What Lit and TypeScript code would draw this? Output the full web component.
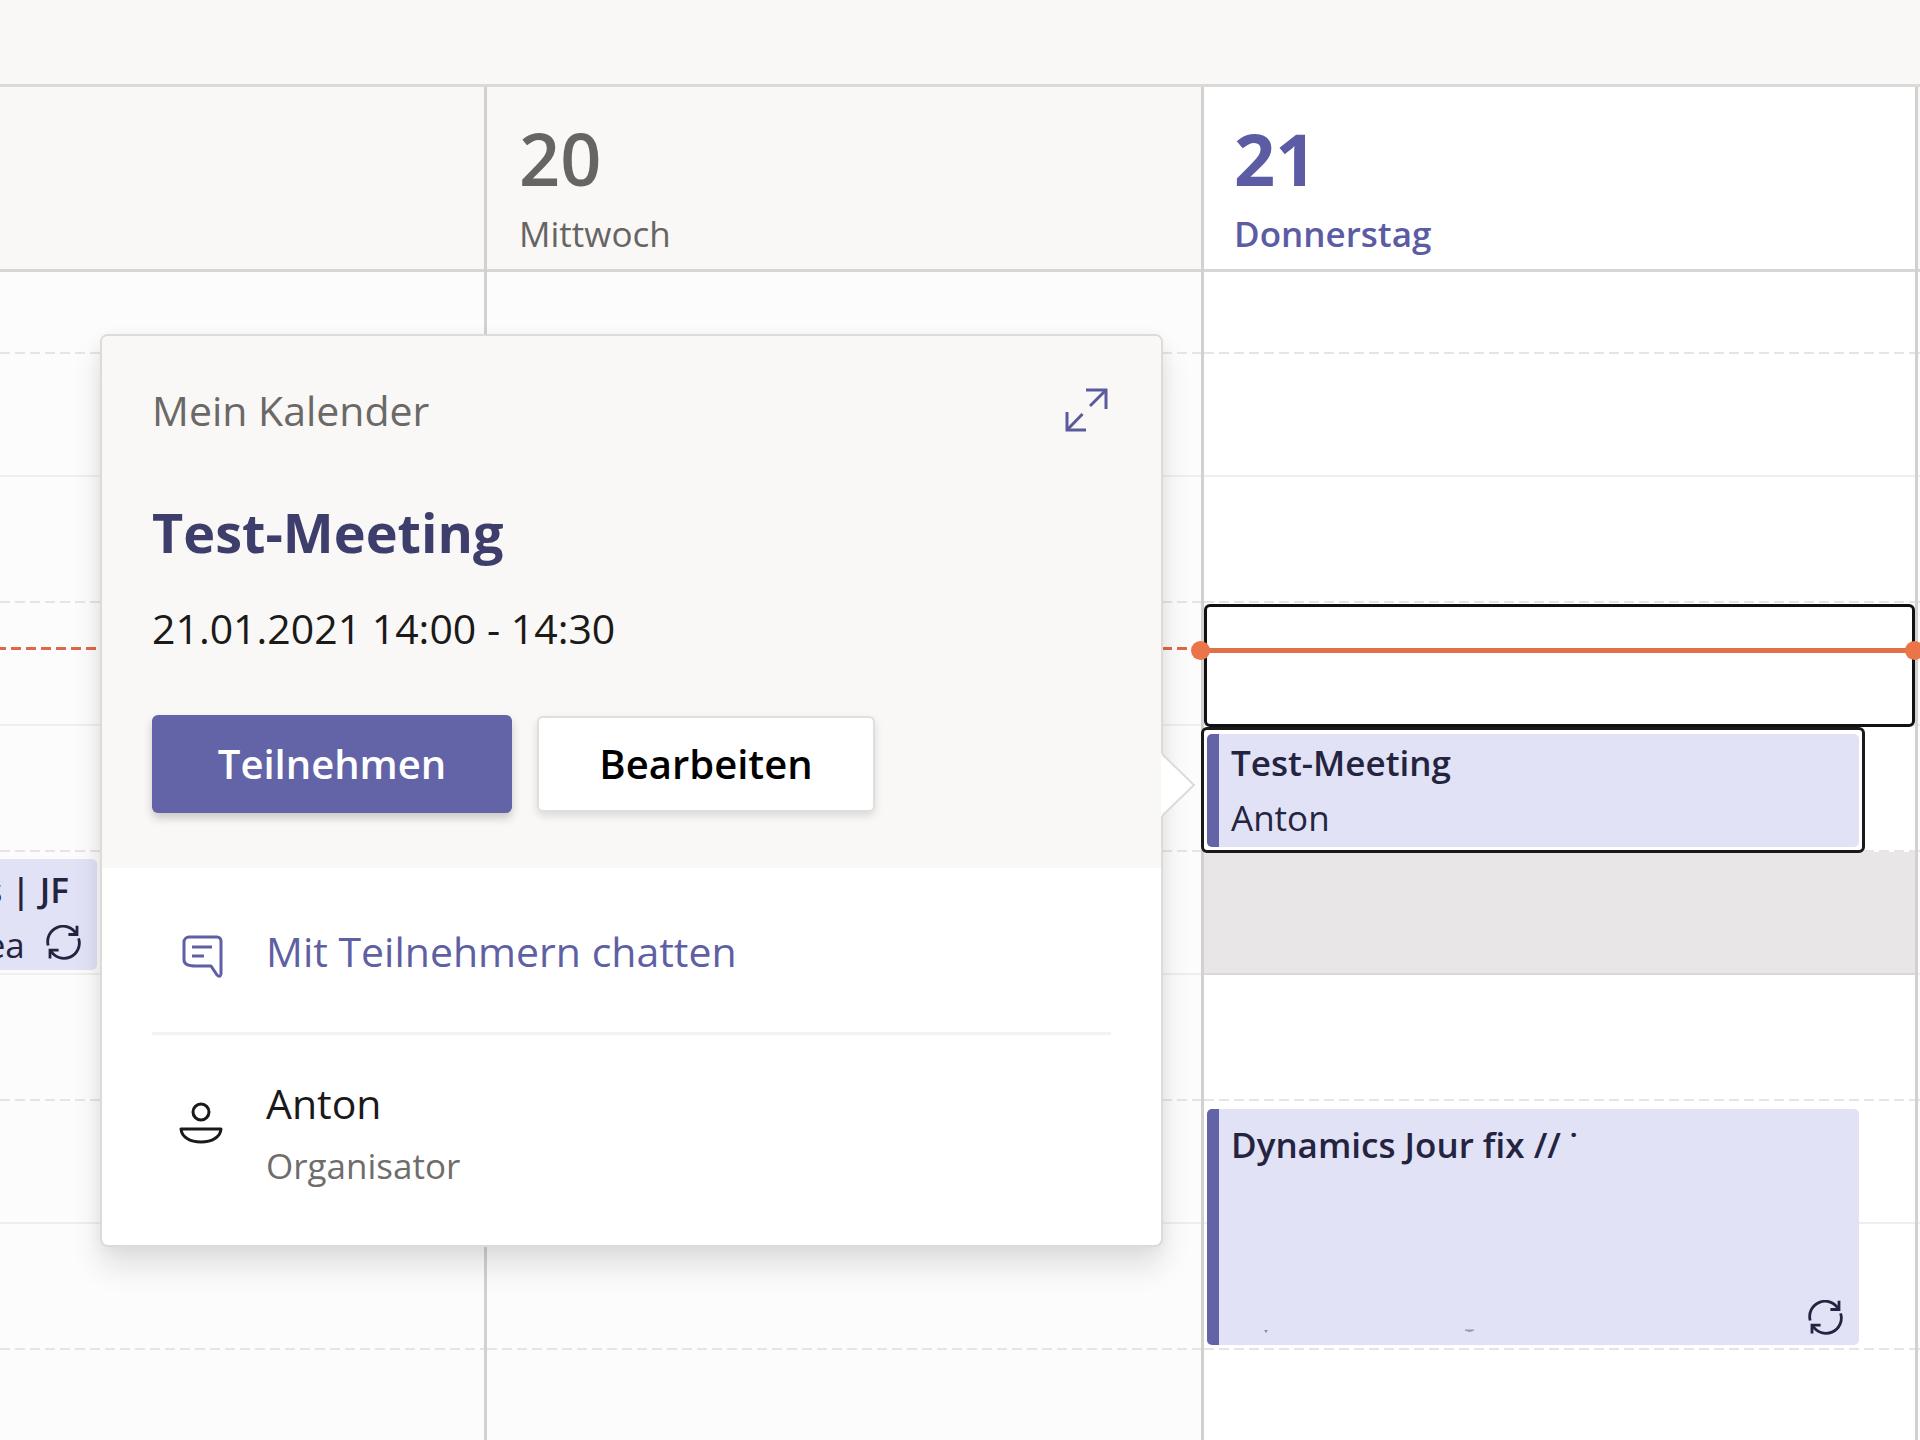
import { LitElement, html, css, nothing } from "lit";
import { customElement, property } from "lit/decorators.js";
import { classMap } from "lit/directives/class-map.js";

const recurIcon = html`<svg class="recur" viewBox="0 0 35 35" width="35" height="35" fill="none" stroke="currentColor" stroke-width="2.8" aria-hidden="true">
  <path d="M2.2 20.5A15.3 15.3 0 0 1 30.4 9.2" />
  <path d="M31 .8v8.7h-8.6" />
  <path d="M32.6 13.4A15.3 15.3 0 0 1 4.6 25.4" />
  <path d="M4 33.6v-8.4h8.6" />
</svg>`;

interface CalendarEvent {
  title: string;
  person?: string;
  kind: "past" | "selected" | "tall";
  recurring: boolean;
}

@customElement("event-popover")
class EventPopover extends LitElement {
  static styles = css`
    :host {
      display: block;
      color: #1b1a19;
      font-weight: 400;
    }
    .card {
      position: relative;
      box-sizing: border-box;
      border: 2px solid #dddbda;
      border-radius: 8px;
      background: #fff;
      box-shadow: 0 20px 30px rgba(0, 0, 0, 0.11), 0 2px 16px rgba(40, 20, 30, 0.05);
    }
    .summary {
      padding: 46px 50px 55px;
      border-radius: 6px 6px 0 0;
      background: #f9f8f6;
    }
    .topline {
      display: flex;
      align-items: center;
      justify-content: space-between;
      font-size: 41px;
      line-height: 56px;
      color: #6b6967;
    }
    button {
      font: inherit;
      cursor: pointer;
    }
    .expand {
      display: flex;
      padding: 0;
      border: 0;
      background: none;
      color: #5b5a9c;
    }
    .expand svg {
      fill: none;
      stroke: currentColor;
      stroke-width: 3;
    }
    h2 {
      margin: 58px 0 32px;
      font-size: 54px;
      line-height: 72px;
      font-weight: 700;
      color: #3d3e6b;
    }
    .time {
      display: block;
      font-size: 41px;
      line-height: 56px;
    }
    .actions {
      display: flex;
      align-items: center;
      gap: 25px;
      margin-top: 59px;
    }
    .btn {
      box-sizing: border-box;
      font-size: 40px;
      line-height: 56px;
      font-weight: 600;
      border-radius: 6px;
    }
    .primary {
      padding: 21px 64px;
      min-width: 360px;
      border: 0;
      background: #6264a7;
      color: #fff;
      box-shadow: 0 5px 10px rgba(0, 0, 0, 0.2);
    }
    .secondary {
      padding: 18px 60px;
      min-width: 338px;
      border: 2px solid #e1dfdd;
      background: #fff;
      box-shadow: 0 4px 8px rgba(0, 0, 0, 0.12);
    }
    .details {
      padding: 55px 50px;
    }
    .row {
      display: grid;
      grid-template-columns: 102px 1fr;
      column-gap: 12px;
      align-items: center;
      font-size: 41px;
      line-height: 56px;
    }
    .row svg {
      justify-self: center;
      overflow: visible;
      fill: none;
      stroke: currentColor;
      stroke-width: 3;
    }
    .chat {
      color: #5f5fa3;
      text-decoration: none;
    }
    hr {
      margin: 53px 0 40px;
      border: 0;
      border-top: 3px solid #f3f2f1;
    }
    .role {
      margin-top: 11px;
      font-size: 35px;
      line-height: 48px;
      color: #6f6d6b;
    }
    .pointer {
      position: absolute;
      left: 100%;
      top: 414px;
    }
  `;

  render() {
    return html`
      <section class="card" role="dialog" aria-label="Test-Meeting">
        <div class="summary">
          <div class="topline">
            <span>Mein Kalender</span>
            <button class="expand" aria-label="Erweitern">
              <svg width="46" height="44" viewBox="0 0 46 44">
                <path d="M21 2H41V21" />
                <path d="M40.5 2.500L25 18" />
                <path d="M2 24V42H21" />
                <path d="M2.5 41.500L17.5 26" />
              </svg>
            </button>
          </div>
          <h2>Test-Meeting</h2>
          <time class="time" datetime="2021-01-21T14:00">21.01.2021 14:00 - 14:30</time>
          <div class="actions">
            <button class="btn primary">Teilnehmen</button>
            <button class="btn secondary">Bearbeiten</button>
          </div>
        </div>
        <div class="details">
          <a class="row chat" href="#chat">
            <svg width="48" height="56" viewBox="0 0 48 56" aria-hidden="true">
              <path stroke-linejoin="round" d="M10 14H38a4 4 0 0 1 4 4V51q-1 4-4 1L32 43H17q-12 0-12-6V19a5 5 0 0 1 5-5Z" />
              <path d="M13 24H33M13 33H25" />
            </svg>
            <span>Mit Teilnehmern chatten</span>
          </a>
          <hr />
          <div class="row">
            <svg width="48" height="56" viewBox="0 0 48 56" aria-hidden="true">
              <circle cx="22" cy="7" r="8" />
              <path stroke-linejoin="round" d="M2 24H42C41.5 32 33 37 22 37S2.500 32 2 24Z" />
            </svg>
            <div>
              <div>Anton</div>
              <div class="role">Organisator</div>
            </div>
          </div>
        </div>
        <svg class="pointer" width="36" height="70" viewBox="0 0 36 70" aria-hidden="true">
          <path d="M0 3L33 35L0 67" fill="#fff" stroke="#dddbda" stroke-width="2" />
          <path d="M0 4V66" stroke="#fff" stroke-width="2" />
        </svg>
      </section>
    `;
  }
}

@customElement("calendar-event")
class CalendarEventTile extends LitElement {
  @property({ attribute: false }) event!: CalendarEvent;

  static styles = css`
    :host {
      display: block;
      min-width: 0;
    }
    .tile {
      box-sizing: border-box;
      height: 100%;
      display: flex;
      overflow: hidden;
      border-radius: 5px;
      background: #e1e2f6;
      color: #252440;
      font-size: 35px;
      line-height: 55px;
    }
    .bar {
      flex: 0 0 12px;
      background: #6264a7;
    }
    .text {
      flex: 1;
      min-width: 0;
      display: flex;
      flex-direction: column;
      padding: 1px 16px 0 12px;
      white-space: nowrap;
    }
    .title {
      font-weight: 600;
    }
    .past {
      border-radius: 0 5px 5px 0;
    }
    .past .text {
      align-items: flex-end;
      padding: 3px 16px 0 0;
    }
    .past .title {
      padding-right: 12px;
    }
    .past .meta {
      display: flex;
      gap: 21px;
    }
    .past .recur {
      margin-top: 8px;
    }
    .tall .text {
      padding-top: 8px;
      padding-bottom: 10px;
    }
    .foot {
      margin-top: auto;
      display: flex;
      align-items: flex-end;
      justify-content: space-between;
    }
  `;

  render() {
    const e = this.event;
    return html`
      <article class="tile ${e.kind}">
        ${e.kind === "past" ? nothing : html`<span class="bar"></span>`}
        <div class="text">
          <div class="title">${e.title}</div>
          ${e.person
            ? html`<div class="meta"><span>${e.person}</span>${e.recurring ? recurIcon : nothing}</div>`
            : html`<div class="foot">
                <svg width="250" height="6" viewBox="0 0 250 6" aria-hidden="true">
                  <path d="M33 1h4l-2 3Z" fill="#8e8da6" />
                  <path d="M234 1h9q-4.500 3-9 0Z" fill="#9a99b4" stroke="#9a99b4" />
                </svg>
                ${recurIcon}
              </div>`}
        </div>
      </article>
    `;
  }
}

const HALF_HOURS = [1, 2, 3, 4, 5, 6, 7, 8, 9, 10];

const pastEvent: CalendarEvent = { title: "s | JF", person: "ea", kind: "past", recurring: true };
const testMeeting: CalendarEvent = { title: "Test-Meeting", person: "Anton", kind: "selected", recurring: false };
const jourFix: CalendarEvent = { title: "Dynamics Jour fix // ˙", kind: "tall", recurring: true };

@customElement("app-root")
class AppRoot extends LitElement {
  static styles = css`
    :host {
      display: flex;
      flex-direction: column;
      min-height: 100vh;
      overflow: hidden;
      background: #fff;
      font-family: "Open Sans", "Noto Sans", sans-serif;
    }
    .toolbar {
      height: 84px;
      background: #f9f8f6;
    }
    .week {
      flex: 1;
      display: grid;
      grid-template-columns: minmax(0, 484fr) minmax(0, 717fr) minmax(0, 714fr) minmax(0, 5fr);
      border-top: 3px solid #dcdad9;
    }
    .day {
      display: flex;
      flex-direction: column;
      border-left: 3px solid #d3d1d0;
      background: #fcfcfc;
    }
    .day:first-child {
      border-left: 0;
    }
    .head {
      box-sizing: border-box;
      height: 185px;
      padding: 31px 32px 11px;
      border-bottom: 3px solid #d8d6d5;
      background: #f9f8f6;
      color: #676563;
    }
    .number {
      font-size: 72px;
      line-height: 80px;
      font-weight: 600;
    }
    .name {
      margin-top: 12px;
      font-size: 35px;
      line-height: 48px;
    }
    .today,
    .today .head {
      background: #fff;
    }
    .today .head {
      padding-left: 30px;
      color: #5b5ca3;
    }
    .today .number {
      font-weight: 700;
    }
    .today .name {
      font-weight: 600;
    }
    .slots {
      flex: 1;
      display: grid;
      grid-template-columns: minmax(0, 1fr);
      grid-template-rows: 82px 123px 126px 123px 126px 123px 126px 123px 126px minmax(80px, 1fr);
    }
    .slot {
      border-bottom: 2px solid #efeeee;
    }
    .slot.half {
      border-bottom: 0;
      background: repeating-linear-gradient(to right, #e6e4e4 0 10px, transparent 10px 15px) left bottom / 100% 2px no-repeat;
    }
    .slot.last {
      border-bottom: 0;
    }
    .slot.busy {
      background: #e8e6e7;
      border-bottom-color: #d9d7d7;
    }
    .slots > * {
      grid-column: 1;
    }
    .r1 { grid-row: 1; }
    .r2 { grid-row: 2; }
    .r3 { grid-row: 3; }
    .r4 { grid-row: 4; }
    .r5 { grid-row: 5; }
    .r6 { grid-row: 6; }
    .r7 { grid-row: 7; }
    .r8 { grid-row: 8; }
    .r9 { grid-row: 9; }
    .r10 { grid-row: 10; }
    .now-past {
      height: 3px;
      margin-top: 44px;
      background: repeating-linear-gradient(to right, #dd6a42 0 10px, transparent 10px 15px);
    }
    .day:first-child .now-past {
      background-position-x: -4px;
    }
    .now {
      position: relative;
      height: 5px;
      margin-top: 45px;
      background: #e0704a;
    }
    .now::before,
    .now::after {
      content: "";
      position: absolute;
      top: -7px;
      width: 19px;
      height: 19px;
      border-radius: 50%;
      background: #e97548;
    }
    .now::before {
      left: -13px;
    }
    .now::after {
      right: -9px;
    }
    .picked {
      box-sizing: border-box;
      margin: 1px 0 -1px;
      padding: 0;
      border: 3px solid #111;
      border-radius: 6px;
      background: #fff;
    }
    .past-event {
      width: 20%;
      margin: 7px 0 5px;
    }
    .focus {
      position: relative;
      z-index: 1;
      box-sizing: border-box;
      display: grid;
      margin: 1px 50px -1px -3px;
      padding: 4px 3px 3px;
      border: 3px solid #1a1a1a;
      border-radius: 6px;
      background: #fff;
    }
    .popover {
      position: absolute;
      right: calc(100% + 41px);
      top: -396px;
      width: 1063px;
    }
    .jour-fix {
      grid-row: 8 / 10;
      margin: 8px 56px 5px 3px;
    }
  `;

  private slotRows(busy = 0) {
    return HALF_HOURS.map(
      (n) =>
        html`<div class=${classMap({ slot: true, half: n % 2 === 1, last: n === 10, busy: n === busy, [`r${n}`]: true })}></div>`,
    );
  }

  render() {
    return html`
      <div class="toolbar"></div>
      <main class="week">
        <section class="day">
          <header class="head"></header>
          <div class="slots">
            ${this.slotRows()}
            <div class="now-past r4"></div>
            <calendar-event class="past-event r6" .event=${pastEvent}></calendar-event>
          </div>
        </section>
        <section class="day">
          <header class="head">
            <div class="number">20</div>
            <div class="name">Mittwoch</div>
          </header>
          <div class="slots">
            ${this.slotRows()}
            <div class="now-past r4"></div>
          </div>
        </section>
        <section class="day today">
          <header class="head">
            <div class="number">21</div>
            <div class="name">Donnerstag</div>
          </header>
          <div class="slots">
            ${this.slotRows(6)}
            <button class="picked r4" aria-label="13:30 - 14:00"></button>
            <div class="now r4"></div>
            <calendar-event class="jour-fix" .event=${jourFix}></calendar-event>
            <div class="focus r5">
              <calendar-event .event=${testMeeting}></calendar-event>
              <event-popover class="popover"></event-popover>
            </div>
          </div>
        </section>
        <section class="day">
          <header class="head"></header>
          <div class="slots">${this.slotRows()}</div>
        </section>
      </main>
    `;
  }
}
